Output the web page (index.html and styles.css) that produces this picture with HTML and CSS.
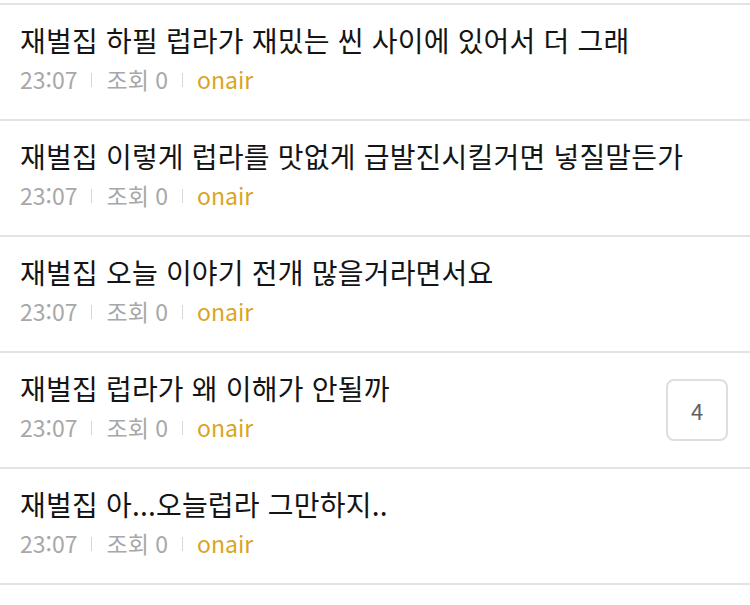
FILE: index.html
```html
<!DOCTYPE html>
<html lang="ko">
<head>
<meta charset="utf-8">
<link rel="stylesheet" href="styles.css">
</head>
<body>
<ul class="list">
  <li class="item">
    <div class="body">
      <div class="title">재벌집 하필 럽라가 재밌는 씬 사이에 있어서 더 그래</div>
      <div class="meta"><span class="time">23:07</span><span class="sep"></span><span class="views">조회 0</span><span class="sep"></span><span class="author">onair</span></div>
    </div>
  </li>
  <li class="item">
    <div class="body">
      <div class="title">재벌집 이렇게 럽라를 맛없게 급발진시킬거면 넣질말든가</div>
      <div class="meta"><span class="time">23:07</span><span class="sep"></span><span class="views">조회 0</span><span class="sep"></span><span class="author">onair</span></div>
    </div>
  </li>
  <li class="item">
    <div class="body">
      <div class="title">재벌집 오늘 이야기 전개 많을거라면서요</div>
      <div class="meta"><span class="time">23:07</span><span class="sep"></span><span class="views">조회 0</span><span class="sep"></span><span class="author">onair</span></div>
    </div>
  </li>
  <li class="item">
    <div class="body">
      <div class="title">재벌집 럽라가 왜 이해가 안될까</div>
      <div class="meta"><span class="time">23:07</span><span class="sep"></span><span class="views">조회 0</span><span class="sep"></span><span class="author">onair</span></div>
    </div>
    <div class="count">4</div>
  </li>
  <li class="item">
    <div class="body">
      <div class="title">재벌집 아...오늘럽라 그만하지..</div>
      <div class="meta"><span class="time">23:07</span><span class="sep"></span><span class="views">조회 0</span><span class="sep"></span><span class="author">onair</span></div>
    </div>
  </li>
</ul>
</body>
</html>
```
FILE: styles.css
```css
html, body {
  margin: 0;
  padding: 0;
  background: #fff;
}
body {
  font-family: "Noto Sans CJK KR", "Noto Sans", sans-serif;
  color: #1a1a1a;
}
.list {
  list-style: none;
  margin: 0;
  padding: 3px 0 0;
}
.item {
  display: flex;
  align-items: flex-start;
  height: 114px;
  border-top: 2px solid #e3e3e3;
  padding: 0 22px 0 20px;
}
.item:last-child {
  border-bottom: 2px solid #e3e3e3;
}
.body {
  flex: 1;
  min-width: 0;
  padding-top: 15px;
}
.title {
  font-size: 28px;
  line-height: 40px;
  letter-spacing: 0.2px;
  white-space: nowrap;
  color: #141414;
}
.meta {
  margin-top: 4px;
  font-size: 23px;
  line-height: 30px;
  color: #a8a8a8;
  display: flex;
  align-items: center;
}
.sep {
  width: 1px;
  height: 14px;
  background: #d6d6d6;
  margin: 2px 14px 0;
}
.author {
  color: #d9a520;
}
.count {
  align-self: center;
  width: 62px;
  height: 62px;
  box-sizing: border-box;
  border: 2px solid #dedede;
  border-radius: 8px;
  display: flex;
  align-items: center;
  justify-content: center;
  font-size: 22px;
  color: #5f5f5f;
}
```
